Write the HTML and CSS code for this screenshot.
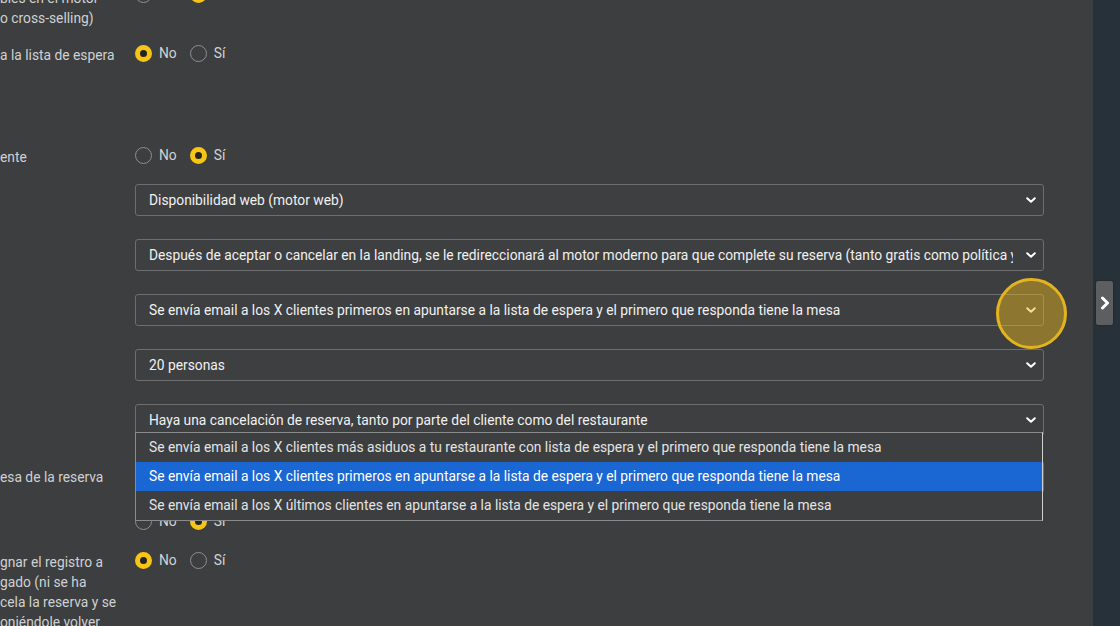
FILE: index.html
```html
<!DOCTYPE html>
<html lang="es">
<head>
<meta charset="utf-8">
<title>Configuración</title>
<link rel="stylesheet" href="styles.css">
</head>
<body>
<div class="app">
  <main class="content">
    <div class="form">
      <div class="row row-a">
        <div class="label">bles en el motor<br>o cross-selling)</div>
        <div class="radios radios-a">
          <span class="radio"></span><span class="opt">No</span>
          <span class="radio on"></span><span class="opt">Sí</span>
        </div>
      </div>

      <div class="row row-b">
        <div class="label">a la lista de espera</div>
        <div class="radios">
          <span class="radio on"></span><span class="opt">No</span>
          <span class="radio"></span><span class="opt">Sí</span>
        </div>
      </div>

      <div class="row row-c">
        <div class="label">ente</div>
        <div class="radios">
          <span class="radio"></span><span class="opt">No</span>
          <span class="radio on"></span><span class="opt">Sí</span>
        </div>
      </div>

      <div class="row row-sel first">
        <div class="label"></div>
        <div class="select"><span class="value">Disponibilidad web (motor web)</span><svg class="chev" viewBox="0 0 10 6"><path d="M1.2 1.2 L5 4.8 L8.8 1.2"/></svg></div>
      </div>

      <div class="row row-sel">
        <div class="label"></div>
        <div class="select"><span class="value">Después de aceptar o cancelar en la landing, se le redireccionará al motor moderno para que complete su reserva (tanto gratis como política y depósito)</span><svg class="chev" viewBox="0 0 10 6"><path d="M1.2 1.2 L5 4.8 L8.8 1.2"/></svg></div>
      </div>

      <div class="row row-sel">
        <div class="label"></div>
        <div class="select"><span class="value">Se envía email a los X clientes primeros en apuntarse a la lista de espera y el primero que responda tiene la mesa</span><svg class="chev" viewBox="0 0 10 6"><path d="M1.2 1.2 L5 4.8 L8.8 1.2"/></svg>
          <span class="spot"></span>
        </div>
      </div>

      <div class="row row-sel">
        <div class="label"></div>
        <div class="select"><span class="value">20 personas</span><svg class="chev" viewBox="0 0 10 6"><path d="M1.2 1.2 L5 4.8 L8.8 1.2"/></svg></div>
      </div>

      <div class="row row-sel">
        <div class="label"></div>
        <div class="select"><span class="value">Haya una cancelación de reserva, tanto por parte del cliente como del restaurante</span><svg class="chev" viewBox="0 0 10 6"><path d="M1.2 1.2 L5 4.8 L8.8 1.2"/></svg>
          <ul class="list">
            <li>Se envía email a los X clientes más asiduos a tu restaurante con lista de espera y el primero que responda tiene la mesa</li>
            <li class="active">Se envía email a los X clientes primeros en apuntarse a la lista de espera y el primero que responda tiene la mesa</li>
            <li>Se envía email a los X últimos clientes en apuntarse a la lista de espera y el primero que responda tiene la mesa</li>
          </ul>
        </div>
      </div>

      <div class="row row-d">
        <div class="label">esa de la reserva</div>
        <div class="select"><span class="value">Se envía email a los X clientes primeros en apuntarse a la lista de espera y el primero que responda tiene la mesa</span><svg class="chev" viewBox="0 0 10 6"><path d="M1.2 1.2 L5 4.8 L8.8 1.2"/></svg></div>
      </div>

      <div class="row row-e">
        <div class="label"></div>
        <div class="radios">
          <span class="radio"></span><span class="opt">No</span>
          <span class="radio on"></span><span class="opt">Sí</span>
        </div>
      </div>

      <div class="row row-f">
        <div class="label">gnar el registro a<br>gado (ni se ha<br>cela la reserva y se<br>oniéndole volver</div>
        <div class="radios">
          <span class="radio on"></span><span class="opt">No</span>
          <span class="radio"></span><span class="opt">Sí</span>
        </div>
      </div>
    </div>
  </main>
  <aside class="side">
    <div class="tab"><svg viewBox="0 0 10 14"><path d="M2.5 2 L7.5 7 L2.5 12"/></svg></div>
  </aside>
</div>
</body>
</html>
```

FILE: styles.css
```css
* { box-sizing: border-box; }
html, body { margin: 0; padding: 0; }
body {
  width: 1120px;
  height: 626px;
  overflow: hidden;
  background: #3c3e3f;
  font-family: Roboto, "Liberation Sans", Arial, sans-serif;
  font-size: 13.8px;
  color: #cfd1d2;
}
.app {
  display: flex;
  height: 626px;
}
.content {
  width: 1093px;
  flex: none;
  overflow: hidden;
}
.form {
  display: flex;
  flex-direction: column;
}
.row {
  display: grid;
  grid-template-columns: 135px 909px;
  align-items: start;
}
.label {
  line-height: 20px;
  color: #cfd1d2;
  white-space: nowrap;
}
.row-a { margin-top: -12px; }
.row-b { margin-top: 17px; }
.row-c { margin-top: 82px; }
.row-sel { margin-top: 23px; align-items: center; }
.row-sel.first { margin-top: 17px; }
.row-d { margin-top: 25px; align-items: center; }
.row-e { margin-top: 20px; }
.row-f { margin-top: 19px; }

.radios {
  display: flex;
  align-items: center;
  height: 20px;
  padding-bottom: 4px;
}
.radios-a { padding-bottom: 8px; }
.radio {
  width: 17px;
  height: 17px;
  border-radius: 50%;
  border: 1.5px solid #8e8f90;
  flex: none;
}
.radio.on {
  border: 5px solid #f6c516;
  background: #242424;
}
.opt {
  margin-left: 7px;
  margin-right: 13px;
  color: #d2d3d4;
  line-height: 20px;
}

.select {
  position: relative;
  height: 32px;
  border: 1px solid #6c6e70;
  border-radius: 3px;
  background: #3d3f40;
  display: flex;
  align-items: center;
  padding-left: 13px;
  padding-right: 30px;
  color: #f1f1f1;
}
.value {
  flex: 1;
  white-space: nowrap;
  overflow: hidden;
  line-height: 20px;
}
.chev {
  position: absolute;
  right: 7px;
  top: 12px;
  width: 10px;
  height: 6px;
  fill: none;
  stroke: #ffffff;
  stroke-width: 2;
  stroke-linecap: round;
  stroke-linejoin: round;
}
.spot {
  position: absolute;
  right: -24px;
  top: -17px;
  width: 71px;
  height: 71px;
  border-radius: 50%;
  border: 3px solid #e4b420;
  background: rgba(230, 180, 30, 0.47);
}
.list {
  position: absolute;
  left: -1px;
  right: 0;
  top: 27px;
  margin: 0;
  padding: 0;
  list-style: none;
  background: #3c3e3f;
  border: 1px solid #8a8b8c;
  border-right-color: #d0d0d0;
  z-index: 5;
}
.list li {
  height: 29px;
  line-height: 29px;
  padding-left: 13px;
  white-space: nowrap;
  overflow: hidden;
  color: #e4e4e4;
}
.list li.active {
  background: #1a66d2;
  color: #ffffff;
}

.side {
  flex: 1;
  background: #27313a;
  display: flex;
  flex-direction: column;
  align-items: flex-start;
}
.tab {
  margin-top: 281px;
  margin-left: 3px;
  width: 17px;
  height: 44px;
  background: #5c5e60;
  border-radius: 2px;
  display: flex;
  align-items: center;
  justify-content: center;
  box-shadow: 0 0 2px rgba(0,0,0,0.4);
}
.tab svg {
  width: 10px;
  height: 14px;
  fill: none;
  stroke: #ffffff;
  stroke-width: 3;
  stroke-linecap: round;
  stroke-linejoin: round;
}
```
